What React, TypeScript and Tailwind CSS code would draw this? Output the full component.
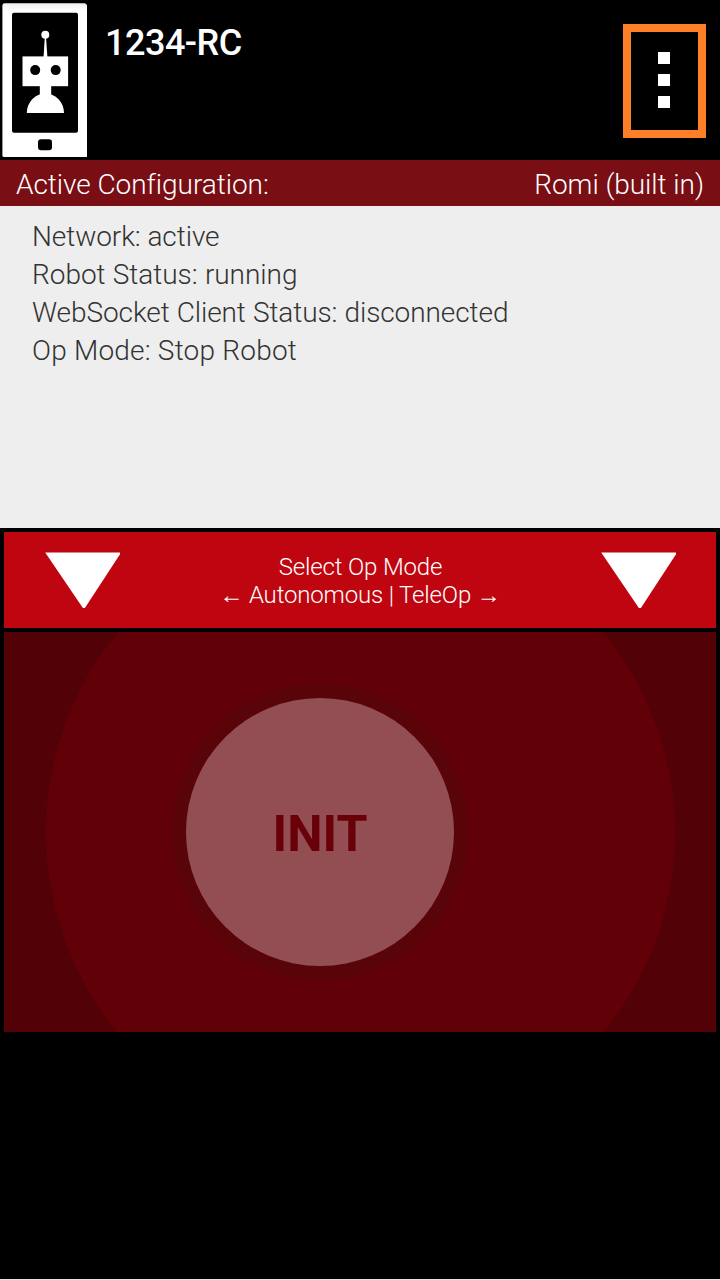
import React from "react";

const STATUS_LINES = [
  { text: "Network: active", tracking: "tracking-[-0.07px]" },
  { text: "Robot Status: running", tracking: "tracking-[-0.04px] [word-spacing:0.5px]" },
  { text: "WebSocket Client Status: disconnected", tracking: "tracking-[-0.09px] [word-spacing:0.4px]" },
  { text: "Op Mode: Stop Robot", tracking: "tracking-[0.21px]" },
];

function RobotPhoneIcon() {
  return (
    <svg width="88" height="160" viewBox="0 0 88 160" className="block shrink-0" aria-hidden="true">
      <defs>
        <linearGradient id="phoneBody" x1="0" y1="0" x2="0" y2="1">
          <stop offset="0" stopColor="#f0f0f0" />
          <stop offset="0.05" stopColor="#ffffff" />
        </linearGradient>
      </defs>
      <path d="M4.5 3.3H85L87 5V157H4Q2.4 157 2.4 155.4V5.5Q2.4 3.3 4.5 3.3Z" fill="url(#phoneBody)" />
      <rect x="12" y="12.8" width="66" height="120" rx="2" fill="#000" />
      <rect x="38" y="139.2" width="14" height="11" rx="3" fill="#000" />
      <g fill="#fff">
        <circle cx="45.3" cy="34.8" r="4" />
        <path d="M44.8 37H46L47.4 57H43.6Z" />
        <rect x="22.5" y="56.4" width="45.6" height="29.8" />
        <rect x="39.8" y="85" width="11.4" height="12" />
        <path d="M26.8 113A18.6 19.5 0 0 1 64 113Z" />
      </g>
      <circle cx="35.2" cy="70.1" r="5" fill="#000" />
      <circle cx="55.7" cy="70.1" r="5" fill="#000" />
    </svg>
  );
}

function DownTriangle() {
  return (
    <svg width="80" height="56" viewBox="0 0 80 56" className="block shrink-0" aria-hidden="true">
      <path d="M1.2 0.4H76V2.2L40.9 56H38.9Z" fill="#fff" />
    </svg>
  );
}

function Header() {
  return (
    <header className="flex h-[160px] items-start">
      <RobotPhoneIcon />
      <h1 className="ml-[17px] mt-[22px] text-[36px] leading-[42px] font-medium tracking-[-0.5px] text-white">
        1234-RC
      </h1>
      <button
        aria-label="Menu"
        className="ml-auto mr-[14px] mt-6 flex h-[114px] w-[83px] flex-col items-center gap-[10px] border-8 border-[#ff7f27] pr-[1px] pt-5"
      >
        <span className="size-3 bg-white" />
        <span className="size-3 bg-white" />
        <span className="size-3 bg-white" />
      </button>
    </header>
  );
}

function InitPanel() {
  return (
    <section className="mt-1 flex h-[400px] items-center justify-center overflow-hidden bg-[#520107]">
      <div className="flex size-[629px] shrink-0 items-center justify-center rounded-full bg-[#620007]">
        <div className="mr-20 flex size-[300px] items-center justify-center rounded-full bg-[radial-gradient(closest-side,#580409_134px,#5a0409_147px,#620007_150px)]">
          <button className="size-[268px] rounded-full bg-[#934e53] pt-1 text-[50px] leading-none font-bold text-[#690007]">
            INIT
          </button>
        </div>
      </div>
    </section>
  );
}

export default function App() {
  return (
    <div className="flex h-[1280px] w-[720px] flex-col border-b border-[#e8e0e4] bg-black font-['Roboto',sans-serif] font-light">
      <Header />
      <div className="flex h-[46px] items-center justify-between bg-[#790e14] px-4 pt-[3px] text-[28px] leading-[33px] tracking-[-0.05px] text-white">
        <span>Active Configuration:</span>
        <span>Romi (built in)</span>
      </div>
      <div className="h-[322px] bg-[#eeeeee] px-8 pt-3 text-[28px] leading-[38px] text-[#333333]">
        {STATUS_LINES.map(({ text, tracking }) => (
          <p key={text} className={tracking}>
            {text}
          </p>
        ))}
      </div>
      <main className="px-1 pt-1">
        <div className="flex h-24 items-start bg-[#bf0510] pl-10 pr-9 pt-5 text-white">
          <DownTriangle />
          <div className="mt-[1px] flex-1 pr-[3px] text-center text-[24px] leading-[28px] tracking-[-0.16px]">
            <p>Select Op Mode</p>
            <p className="pr-[1px]">← Autonomous | TeleOp →</p>
          </div>
          <DownTriangle />
        </div>
        <InitPanel />
      </main>
    </div>
  );
}
